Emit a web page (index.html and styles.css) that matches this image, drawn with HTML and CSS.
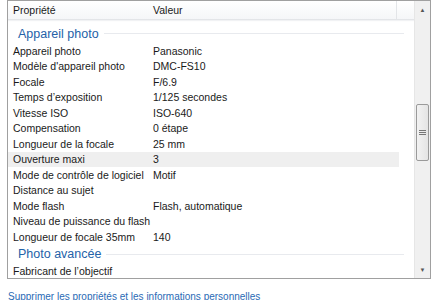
FILE: index.html
```html
<!DOCTYPE html>
<html lang="fr">
<head>
  <meta charset="UTF-8" />
  <title>Propriétés</title>
  <link rel="stylesheet" href="styles.css">
</head>
<body>

<div class="panel">
  <div class="liste">
    <div class="entete">
      <div class="col-prop">Propriété</div>
      <div class="col-val">Valeur</div>
      <div class="col-vide"></div>
    </div>

    <div class="contenu">
      <div class="groupe"><span>Appareil photo</span></div>
      <div class="ligne"><div class="col-prop">Appareil photo</div><div class="col-val">Panasonic</div></div>
      <div class="ligne"><div class="col-prop">Modèle d'appareil photo</div><div class="col-val">DMC-FS10</div></div>
      <div class="ligne"><div class="col-prop">Focale</div><div class="col-val">F/6.9</div></div>
      <div class="ligne"><div class="col-prop">Temps d’exposition</div><div class="col-val">1/125 secondes</div></div>
      <div class="ligne"><div class="col-prop">Vitesse ISO</div><div class="col-val">ISO-640</div></div>
      <div class="ligne"><div class="col-prop">Compensation</div><div class="col-val">0 étape</div></div>
      <div class="ligne"><div class="col-prop">Longueur de la focale</div><div class="col-val">25 mm</div></div>
      <div class="ligne survol"><div class="col-prop">Ouverture maxi</div><div class="col-val">3</div></div>
      <div class="ligne"><div class="col-prop">Mode de contrôle de logiciel</div><div class="col-val">Motif</div></div>
      <div class="ligne"><div class="col-prop">Distance au sujet</div><div class="col-val"></div></div>
      <div class="ligne"><div class="col-prop">Mode flash</div><div class="col-val">Flash, automatique</div></div>
      <div class="ligne"><div class="col-prop">Niveau de puissance du flash</div><div class="col-val"></div></div>
      <div class="ligne"><div class="col-prop">Longueur de focale 35mm</div><div class="col-val">140</div></div>
      <div class="groupe"><span>Photo avancée</span></div>
      <div class="ligne"><div class="col-prop">Fabricant de l’objectif</div><div class="col-val"></div></div>
    </div>
  </div>

  <div class="defil">
    <div class="fleche">&#9650;</div>
    <div class="piste">
      <div class="curseur"><span></span><span></span><span></span></div>
    </div>
    <div class="fleche">&#9660;</div>
  </div>
</div>

<a class="lien" href="#">Supprimer les propriétés et les informations personnelles</a>

</body>
</html>
```

FILE: styles.css
```css
:root {
  --bordure: #a0a0a0;
  --bleu: #2462a8;
  --texte: #1a1a1a;
}
* {
  box-sizing: border-box;
}
body {
  margin: 0;
  padding: 0 8px 0 7px;
  font-family: 'Liberation Sans', Arial, sans-serif;
  font-size: 10.5px;
  color: var(--texte);
  background: #fff;
}
.panel {
  display: flex;
  width: 424px;
  height: 279px;
  border: 1px solid var(--bordure);
  overflow: hidden;
}
.liste {
  flex: 1;
  overflow: hidden;
}
.entete {
  display: flex;
  height: 19px;
  align-items: center;
  background: linear-gradient(#fff, #f5f6f8);
  border-bottom: 1px solid #e3e5e8;
  box-shadow: 0 1px 1px #f1f2f4;
}
.entete .col-prop {
  width: 140px;
  padding-left: 5px;
}
.entete .col-val {
  width: 249px;
  padding-left: 5px;
  border-right: 1px solid #e3e5e8;
  height: 100%;
  display: flex;
  align-items: center;
}
.entete .col-vide {
  flex: 1;
}
.contenu {
  padding-top: 4px;
}
.groupe {
  display: flex;
  align-items: center;
  height: 19px;
  padding-left: 10px;
  padding-right: 10px;
  color: var(--bleu);
  font-size: 12.5px;
}
.groupe::after {
  content: "";
  flex: 1;
  height: 1px;
  margin-left: 5px;
  background: #e8eaee;
}
.ligne {
  display: flex;
  height: 15.5px;
  align-items: center;
  margin-right: 15px;
}
.ligne .col-prop {
  width: 140px;
  padding-left: 5px;
  white-space: nowrap;
}
.ligne .col-val {
  flex: 1;
  padding-left: 5px;
  white-space: nowrap;
}
.survol {
  background: #efefef;
}
.defil {
  width: 16px;
  display: flex;
  flex-direction: column;
  background: #f0f0f0;
  border-left: 1px solid #e6e6e6;
}
.fleche {
  height: 17px;
  font-size: 6px;
  color: #555;
  display: flex;
  align-items: center;
  justify-content: center;
}
.piste {
  flex: 1;
  padding-top: 86px;
}
.curseur {
  height: 57px;
  margin: 0 1px;
  border: 1px solid #9a9a9a;
  border-radius: 2px;
  background: linear-gradient(90deg, #f2f2f2, #e4e4e4);
  display: flex;
  flex-direction: column;
  align-items: center;
  justify-content: center;
  gap: 1px;
}
.curseur span {
  width: 7px;
  height: 1px;
  background: #777;
}
.lien {
  display: block;
  margin: 12px 0 0 1px;
  font-size: 10px;
  color: #2a6ab5;
  text-decoration: none;
}
```
